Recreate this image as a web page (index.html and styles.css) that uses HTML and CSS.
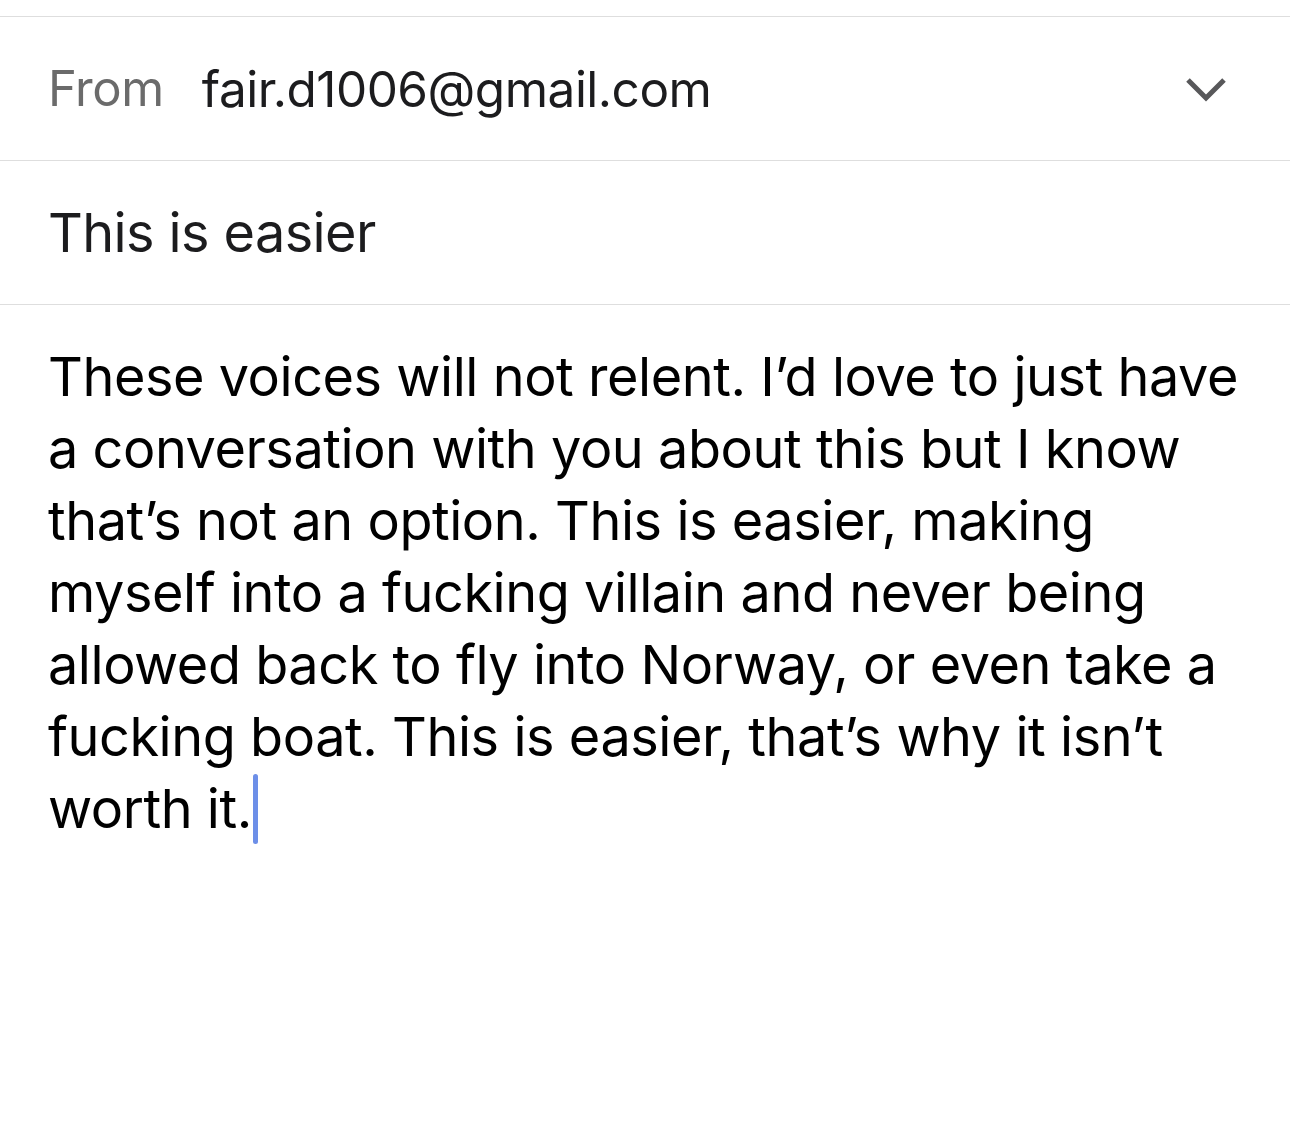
FILE: index.html
```html
<!DOCTYPE html>
<html>
<head>
<meta charset="utf-8">
<link rel="stylesheet" href="styles.css">
</head>
<body>
<div class="compose">
  <div class="row from-row">
    <span class="label">From</span>
    <span class="address">fair.d1006@gmail.com</span>
    <svg class="chevron" width="42" height="28" viewBox="0 0 42 28"><path d="M3 5 L21 23 L39 5" fill="none" stroke="#58585a" stroke-width="5" stroke-linecap="butt" stroke-linejoin="miter"/></svg>
  </div>
  <div class="row subject-row">
    <span class="subject">This is easier</span>
  </div>
  <div class="body-text">These voices will not relent. I’d love to just have a conversation with you about this but I know that’s not an option. This is easier, making myself into a fucking villain and never being allowed back to fly into Norway, or even take a fucking boat. This is easier, that’s why it isn’t worth it.<span class="caret"></span></div>
</div>
</body>
</html>
```
FILE: styles.css
```css
html, body {
  margin: 0;
  padding: 0;
  background: #ffffff;
}
body {
  font-family: Inter, "Noto Sans", sans-serif;
  color: #111;
}
.compose {
  padding-top: 16px;
}
.row {
  height: 143px;
  border-top: 1px solid #dedede;
  display: flex;
  align-items: center;
  padding: 0 48px;
}
.from-row .label {
  font-size: 49px;
  color: #6b6b6b;
  letter-spacing: -0.4px;
  margin-right: 38px;
}
.from-row .address {
  font-size: 49.5px;
  color: #1c1c1e;
  letter-spacing: -0.5px;
  flex: 1;
}
.chevron {
  margin-right: 15px;
}
.subject {
  font-size: 54px;
  color: #1c1c1e;
  letter-spacing: -0.6px;
}
.subject-row {
  border-bottom: 1px solid #dedede;
}
.body-text {
  padding: 36px 42px 0 48px;
  font-size: 54px;
  line-height: 72px;
  letter-spacing: -0.45px;
  color: #000;
}
.caret {
  display: inline-block;
  width: 5px;
  height: 70px;
  background: #6d8fe8;
  border-radius: 3px;
  vertical-align: -16px;
  margin-left: 1px;
}
```
